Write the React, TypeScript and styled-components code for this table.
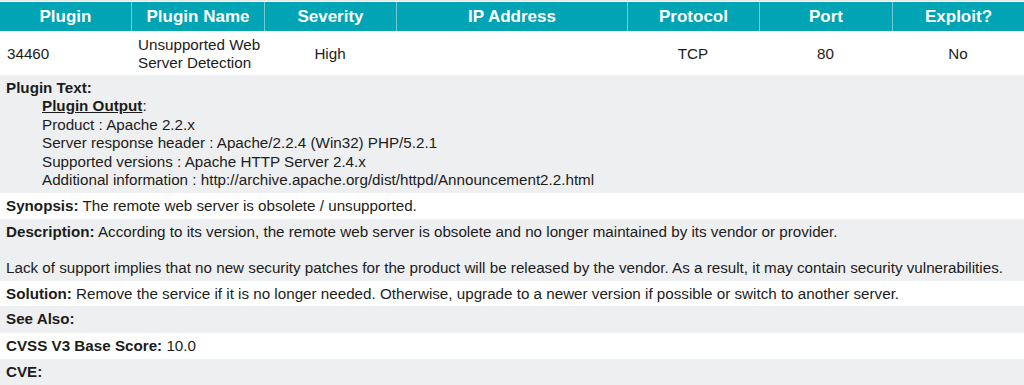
import React from 'react';
import styled, {createGlobalStyle} from 'styled-components';

const GlobalStyle = createGlobalStyle`
    html, body {
        margin: 0;
        padding: 0;
        background: #ffffff;
    }
    body {
        font-family: "Liberation Sans", Arial, sans-serif;
        color: #1c1c1c;
    }
`;

const cols = '131px 133px 132px 231px 132px 133px 132px';

const Page = styled.div`
    width: 1024px;
    height: 385px;
    overflow: hidden;
    padding-top: 2px;
    box-sizing: border-box;
    background: linear-gradient(#e6e8ea, #e6e8ea) top / 100% 1px no-repeat #ffffff;
`;

const HeaderRow = styled.div`
    display: grid;
    grid-template-columns: ${cols};
    height: 29px;
    background: #00a4b4;
`;

const HeaderCell = styled.div`
    display: flex;
    align-items: center;
    justify-content: center;
    color: #ffffff;
    font-weight: bold;
    font-size: 17px;
    border-left: 1px solid rgba(255, 255, 255, 0.45);
    &:first-child {
        border-left: none;
    }
`;

const DataRow = styled.div`
    display: grid;
    grid-template-columns: ${cols};
    height: 44px;
    background: #ffffff;
`;

const DataCell = styled.div<{ $left?: boolean }>`
    display: flex;
    align-items: center;
    justify-content: ${p => (p.$left ? 'flex-start' : 'center')};
    padding-left: ${p => (p.$left ? '7px' : '0')};
    padding-top: 1px;
    white-space: nowrap;
    font-size: 15.2px;
    line-height: 18px;
`;

const DetailRow = styled.div<{ $grey?: boolean; $h: number }>`
    background: ${p => (p.$grey ? '#eeeff0' : '#ffffff')};
    height: ${p => p.$h}px;
    box-sizing: border-box;
    padding: 4px 6px 0;
    font-size: 15.2px;
    line-height: 18px;
`;

const Label = styled.span`
    font-weight: bold;
`;

const Output = styled.div`
    padding-left: 36px;
    line-height: 18.5px;
`;

const OutputTitle = styled.span`
    font-weight: bold;
    text-decoration: underline;
`;

const Blank = styled.div`
    height: 18px;
`;

const headers = ['Plugin', 'Plugin Name', 'Severity', 'IP Address', 'Protocol', 'Port', 'Exploit?'];

const App: React.FC = () => (
    <>
        <GlobalStyle/>
        <Page>
            <HeaderRow>
                {headers.map(h => <HeaderCell key={h}>{h}</HeaderCell>)}
            </HeaderRow>
            <DataRow>
                <DataCell $left>34460</DataCell>
                <DataCell $left><span>Unsupported Web<br/>Server Detection</span></DataCell>
                <DataCell>High</DataCell>
                <DataCell></DataCell>
                <DataCell>TCP</DataCell>
                <DataCell>80</DataCell>
                <DataCell>No</DataCell>
            </DataRow>
            <DetailRow $grey $h={118}>
                <Label>Plugin Text:</Label>
                <Output>
                    <div><OutputTitle>Plugin Output</OutputTitle>:</div>
                    <div>Product : Apache 2.2.x</div>
                    <div>Server response header : Apache/2.2.4 (Win32) PHP/5.2.1</div>
                    <div>Supported versions : Apache HTTP Server 2.4.x</div>
                    <div>Additional information : http://archive.apache.org/dist/httpd/Announcement2.2.html</div>
                </Output>
            </DetailRow>
            <DetailRow $h={26}>
                <Label>Synopsis:</Label> The remote web server is obsolete / unsupported.
            </DetailRow>
            <DetailRow $grey $h={62}>
                <div><Label>Description:</Label> According to its version, the remote web server is obsolete and no longer maintained by its vendor or provider.</div>
                <Blank/>
                <div>Lack of support implies that no new security patches for the product will be released by the vendor. As a result, it may contain security vulnerabilities.</div>
            </DetailRow>
            <DetailRow $h={25}>
                <Label>Solution:</Label> Remove the service if it is no longer needed. Otherwise, upgrade to a newer version if possible or switch to another server.
            </DetailRow>
            <DetailRow $grey $h={27}>
                <Label>See Also:</Label>
            </DetailRow>
            <DetailRow $h={26}>
                <Label>CVSS V3 Base Score:</Label> 10.0
            </DetailRow>
            <DetailRow $grey $h={26}>
                <Label>CVE:</Label>
            </DetailRow>
        </Page>
    </>
);

export default App;
